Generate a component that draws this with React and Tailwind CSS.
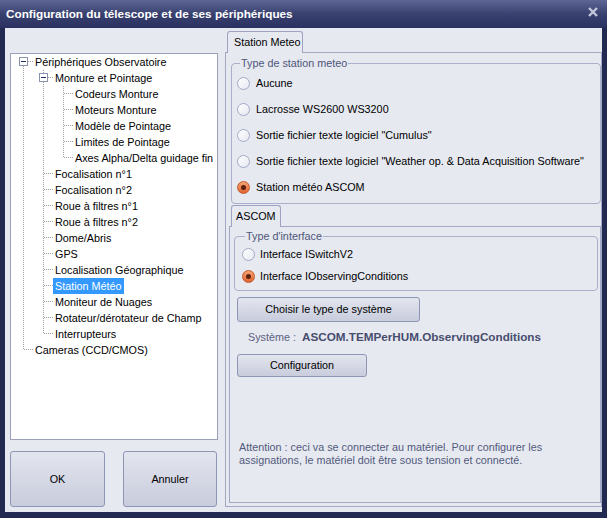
import React from "react"

const tree = [
  {
    label: "Périphériques Observatoire",
    children: [
      {
        label: "Monture et Pointage",
        children: [
          { label: "Codeurs Monture" },
          { label: "Moteurs Monture" },
          { label: "Modèle de Pointage" },
          { label: "Limites de Pointage" },
          { label: "Axes Alpha/Delta guidage fin" },
        ],
      },
      { label: "Focalisation n°1" },
      { label: "Focalisation n°2" },
      { label: "Roue à filtres n°1" },
      { label: "Roue à filtres n°2" },
      { label: "Dome/Abris" },
      { label: "GPS" },
      { label: "Localisation Géographique" },
      { label: "Station Météo", selected: true },
      { label: "Moniteur de Nuages" },
      { label: "Rotateur/dérotateur de Champ" },
      { label: "Interrupteurs" },
    ],
  },
  { label: "Cameras (CCD/CMOS)" },
]

// flatten the tree into rows with the guide info each row needs
function flatten(nodes, guides = [], depth = 0, out = []) {
  nodes.forEach((node, i) => {
    const hasNext = i < nodes.length - 1
    out.push({
      label: node.label,
      selected: node.selected,
      guides,
      hasNext,
      first: depth === 0 && i === 0,
      expandable: !!node.children,
    })
    if (node.children) flatten(node.children, [...guides, hasNext], depth + 1, out)
  })
  return out
}

const DOT = "#a0a0a0"

function Guide({ on }) {
  return (
    <svg width="20" height="16" className="shrink-0">
      {on && <line x1="10.5" y1="0" x2="10.5" y2="16" stroke={DOT} strokeDasharray="1 1" />}
    </svg>
  )
}

function Connector({ first, hasNext, expandable }) {
  return (
    <svg width="20" height="16" className="shrink-0">
      {!first && <line x1="10.5" y1="0" x2="10.5" y2="8" stroke={DOT} strokeDasharray="1 1" />}
      {hasNext && <line x1="10.5" y1="8" x2="10.5" y2="16" stroke={DOT} strokeDasharray="1 1" />}
      <line x1="11" y1="7.5" x2="20" y2="7.5" stroke={DOT} strokeDasharray="1 1" />
      {expandable && (
        <>
          <rect x="6.5" y="3.5" width="8" height="8" fill="#fff" stroke="#8a92ae" />
          <line x1="8" y1="7.5" x2="13" y2="7.5" stroke="#1f2f6a" />
        </>
      )}
    </svg>
  )
}

function Radio({ checked }) {
  return (
    <span
      className={`w-[13px] h-[13px] shrink-0 rounded-full border flex items-center justify-center ${
        checked
          ? "border-[#c45a2a] bg-gradient-to-b from-[#f6a274] to-[#e0622f]"
          : "border-[#a3a9c6] bg-gradient-to-br from-white to-[#e6e8f1]"
      }`}
    >
      {checked && <span className="w-[5px] h-[5px] rounded-full bg-[#5a2210]" />}
    </span>
  )
}

function Button({ className, children }) {
  return (
    <button
      className={`rounded-[3px] border border-[#8f96b5] bg-gradient-to-b from-[#e3e5ee] to-[#c8ccdc] text-[10.8px] text-black flex items-center justify-center ${className}`}
    >
      {children}
    </button>
  )
}

export default function App() {
  const rows = flatten(tree)
  const stationTypes = [
    "Aucune",
    "Lacrosse WS2600 WS3200",
    'Sortie fichier texte logiciel "Cumulus"',
    'Sortie fichier texte logiciel "Weather op. & Data Acquisition Software"',
    "Station météo ASCOM",
  ]

  return (
    <div
      className="w-[607px] h-[518px] bg-[#222a52] flex flex-col overflow-hidden"
      style={{ fontFamily: '"Liberation Sans", Arial, sans-serif' }}
    >
      {/* title bar */}
      <div className="h-[28px] shrink-0 flex items-center pl-[6px] pr-[9px] bg-gradient-to-b from-[#5d6694] via-[#39416f] to-[#2a3161]">
        <span className="flex-1 text-white font-bold text-[11.75px]">
          Configuration du télescope et de ses périphériques
        </span>
        <svg width="10" height="10" viewBox="0 0 10 10" className="mb-[4px]">
          <path d="M1 1L9 9M9 1L1 9" stroke="#c3c7da" strokeWidth="2.4" />
        </svg>
      </div>

      {/* client area */}
      <div className="mx-[5px] mb-[6px] flex-1 bg-[#e6e9f0] flex">
        {/* left column */}
        <div className="w-[213px] pl-[5px] pt-[25px] pb-[5px] flex flex-col">
          <div className="h-[387px] w-[208px] bg-white border border-[#9ca1b9] pl-[2px] text-[10.8px] text-black">
            {rows.map((r, i) => (
              <div key={i} className="flex h-[16px] items-center whitespace-nowrap">
                {r.guides.map((g, j) => (
                  <Guide key={j} on={g} />
                ))}
                <Connector first={r.first} hasNext={r.hasNext} expandable={r.expandable} />
                <span
                  className={`px-[2px] leading-[16px] h-[16px] ${
                    r.selected ? "bg-[#3399ff] text-white" : ""
                  }`}
                >
                  {r.label}
                </span>
              </div>
            ))}
          </div>
          <div className="mt-[11px] flex gap-[18px]">
            <Button className="w-[95px] h-[56px]">OK</Button>
            <Button className="w-[94px] h-[56px]">Annuler</Button>
          </div>
        </div>

        {/* right column */}
        <div className="ml-[7px] w-[377px] pt-[3px] pb-[5px] flex flex-col text-[10.8px] text-black">
          <div className="flex h-[21px]">
            <div className="ml-[2px] w-[76px] h-[22px] relative z-10 rounded-t-[3px] border-t border-l border-r border-[#9ea3c2] bg-[#e6e9f0] pl-[6px] flex items-center">
              Station Meteo
            </div>
          </div>
          <div className="flex-1 border border-[#a3a8c4] flex flex-col">
            <fieldset className="ml-[5px] mt-[4px] border border-[#aab0ca] rounded-[4px] pl-[5px] pb-[3px]">
              <legend className="ml-[3px] px-[1px] text-[#4f567a] leading-[13px]">Type de station meteo</legend>
              {stationTypes.map((t, i) => (
                <div key={i} className="h-[26px] flex items-center gap-[6px] whitespace-nowrap">
                  <Radio checked={i === 4} />
                  <span>{t}</span>
                </div>
              ))}
            </fieldset>

            <div className="flex h-[21px] mt-[1px]">
              <div className="ml-[5px] w-[50px] h-[22px] relative z-10 rounded-t-[3px] border-t border-l border-r border-[#9ea3c2] bg-[#e6e9f0] pl-[4px] flex items-center">
                ASCOM
              </div>
            </div>
            <div className="flex-1 ml-[3px] mb-[3px] border border-[#a3a8c4] flex flex-col">
              <fieldset className="ml-[4px] mr-[2px] mt-[3px] border border-[#aab0ca] rounded-[4px] pl-[7px] pb-[3px]">
                <legend className="ml-[3px] px-[1px] text-[#4f567a] leading-[13px]">Type d'interface</legend>
                {["Interface ISwitchV2", "Interface IObservingConditions"].map((t, i) => (
                  <div key={i} className="h-[22px] flex items-center gap-[5px]">
                    <Radio checked={i === 1} />
                    <span>{t}</span>
                  </div>
                ))}
              </fieldset>

              <Button className="ml-[7px] mt-[6px] w-[183px] h-[25px]">Choisir le type de système</Button>

              <div className="ml-[18px] mt-[8px] h-[14px] flex items-center whitespace-nowrap">
                <span className="text-[#5b6182] w-[54px]">Système :</span>
                <span className="font-bold text-[11.7px] text-[#474d6e]">ASCOM.TEMPerHUM.ObservingConditions</span>
              </div>

              <Button className="ml-[7px] mt-[10px] w-[130px] h-[23px]">Configuration</Button>

              <p className="mt-auto mb-[35px] ml-[9px] leading-[13px] text-[#525a7c]">
                Attention : ceci va se connecter au matériel. Pour configurer les
                <br />
                assignations, le matériel doit être sous tension et connecté.
              </p>
            </div>
          </div>
        </div>
      </div>
    </div>
  )
}
